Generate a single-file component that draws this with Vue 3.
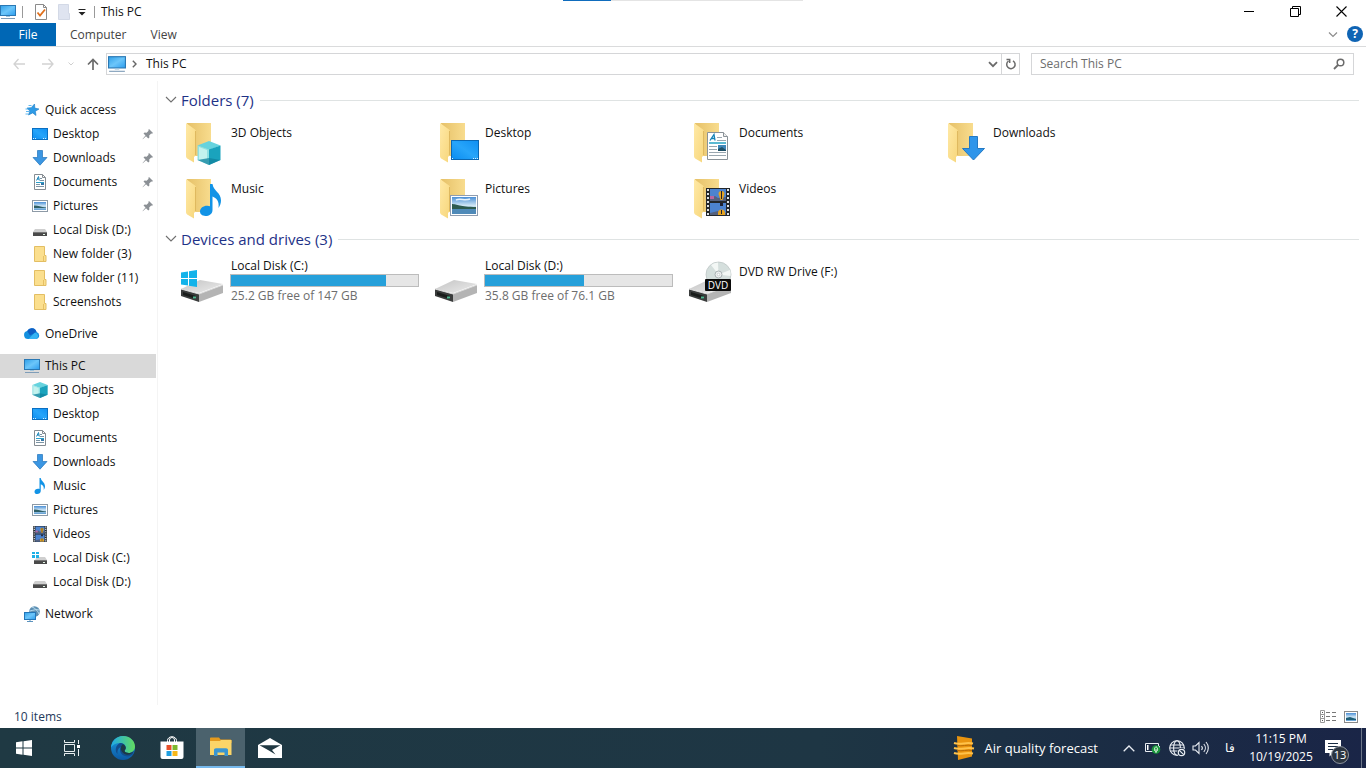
<template>
  <div class="desktop">
    <svg class="sprite" width="0" height="0" aria-hidden="true">
      <defs>
        <linearGradient id="gScreen" x1="0" y1="0" x2="1" y2="1">
          <stop offset="0" stop-color="#2f9fe8" />
          <stop offset="0.5" stop-color="#6cc6fa" />
          <stop offset="1" stop-color="#2b9cee" />
        </linearGradient>
        <linearGradient id="gDesk" x1="0" y1="1" x2="1" y2="0">
          <stop offset="0" stop-color="#0a8cf0" />
          <stop offset="0.5" stop-color="#27a5fa" />
          <stop offset="1" stop-color="#0f8ff2" />
        </linearGradient>
        <linearGradient id="gBack" x1="0" y1="0" x2="1" y2="0">
          <stop offset="0" stop-color="#e6c168" />
          <stop offset="1" stop-color="#f8dc8e" />
        </linearGradient>
        <linearGradient id="gFlap" x1="0" y1="0" x2="1" y2="1">
          <stop offset="0" stop-color="#ffe9a6" />
          <stop offset="1" stop-color="#f7d67b" />
        </linearGradient>
        <linearGradient id="gDriveTop" x1="0" y1="0" x2="1" y2="1">
          <stop offset="0" stop-color="#c4c4c4" />
          <stop offset="1" stop-color="#ececec" />
        </linearGradient>
        <linearGradient id="gSky" x1="0" y1="0" x2="0" y2="1">
          <stop offset="0" stop-color="#4a8fd6" />
          <stop offset="0.5" stop-color="#cfe6f5" />
          <stop offset="1" stop-color="#5c9bd0" />
        </linearGradient>
        <linearGradient id="gEdge" x1="0" y1="0" x2="1" y2="0">
          <stop offset="0" stop-color="#1fa9e8" />
          <stop offset="1" stop-color="#63dc5e" />
        </linearGradient>
        <linearGradient id="gEdgeLow" x1="0" y1="0" x2="0" y2="1">
          <stop offset="0" stop-color="#1a9be0" />
          <stop offset="1" stop-color="#0c59a4" />
        </linearGradient>
      </defs>

      <!-- 16px icons -->
      <symbol id="pc" viewBox="0 0 16 16">
        <rect x="0.5" y="1.5" width="15" height="10" fill="url(#gScreen)" stroke="#2a78b4" />
        <path d="M6 12h4v1h-4z" fill="#9fc4dc" />
        <path d="M1 14.5h14" stroke="#7f9db8" />
      </symbol>
      <symbol id="star" viewBox="0 0 16 16">
        <path d="M10.500 2l.3 4.100 4.200.9-3.600 2.300.6 4.200-3.300-2.600L4.500 13l1.300-4L3 6l4.200-.3z" fill="#2e9be6" stroke="#1c7cc4" stroke-width="0.6" />
        <path d="M4.500 3.500h3M1.500 7h3M2 9.500h3M1.500 12h3" stroke="#4fb0ee" stroke-width="0.9" />
      </symbol>
      <symbol id="desk" viewBox="0 0 16 16">
        <rect x="0.5" y="2.500" width="15" height="11" fill="url(#gDesk)" stroke="#0a6fc2" />
        <path d="M1 12.500h1M3 12.500h1M11 12.500h1M13 12.500h1" stroke="#d7eeff" />
      </symbol>
      <symbol id="down" viewBox="0 0 16 16">
        <path d="M5.500.5h5v7h4.500L8 15.200 1 7.500h4.500z" fill="#3b96e2" stroke="#2374ba" stroke-width="0.7" />
      </symbol>
      <symbol id="doc" viewBox="0 0 16 16">
        <path d="M2.500.5h8l3 3v12h-11z" fill="#fff" stroke="#858c92" />
        <path d="M10.500.5v3h3" fill="none" stroke="#858c92" />
        <path d="M4.500 6.500l2-4 .8 4M5 5h2" fill="none" stroke="#1c86ba" />
        <path d="M4 8.500h8" stroke="#2a9fca" />
        <path d="M4 10.500h4M4 12.500h8M8 6.500h4M8 4.500h2" stroke="#7c94a4" />
        <path d="M9 9h3v2h-3z" fill="#3577a8" />
      </symbol>
      <symbol id="pic" viewBox="0 0 16 16">
        <rect x="0.5" y="2.500" width="15" height="11" fill="#fff" stroke="#8d9aa6" />
        <rect x="2" y="4" width="12" height="8" fill="url(#gSky)" />
        <path d="M2 7.500c3-.5 6 1 12 2V10H2z" fill="#2f5f66" />
      </symbol>
      <symbol id="disk" viewBox="0 0 16 16">
        <path d="M3 7h10l2 3H1z" fill="#cfcfcf" />
        <path d="M1 10h14v4H1z" fill="#4a4a4a" />
        <path d="M1 10h14v1H1z" fill="#777" />
        <path d="M11 12h2v1h-2z" fill="#e3f5e6" />
      </symbol>
      <symbol id="diskc" viewBox="0 0 16 16">
        <path d="M5 7h8l2 3H3z" fill="#cfcfcf" />
        <path d="M2 10h13v4H2z" fill="#4a4a4a" />
        <path d="M2 10h13v1H2z" fill="#777" />
        <path d="M11 12h2v1h-2z" fill="#e3f5e6" />
        <path d="M0 2h3v2H0zM4 2h3v2H4zM0 5h3v3H0zM4 5h3v3H4z" fill="#1fb0e6" />
      </symbol>
      <symbol id="folder" viewBox="0 0 16 16">
        <path d="M2.500.5h10v9h1.500v6H2.500z" fill="#fbdf8e" stroke="#e3be63" />
        <path d="M11.500 10v5" stroke="#e6c064" />
      </symbol>
      <symbol id="cloud" viewBox="0 0 16 16">
        <path d="M4 13a4 4 0 0 1-.8-7.900A5 5 0 0 1 12.500 6 3.600 3.600 0 0 1 12.400 13z" fill="#1490df" />
        <path d="M3.200 5.100A5 5 0 0 1 12.500 6L6 9.500z" fill="#0f5fc4" />
        <path d="M4.500 13L11 6.500a3.600 3.600 0 0 1 1.500 6.500z" fill="#35b4f4" />
      </symbol>
      <symbol id="cube" viewBox="0 0 24 24">
        <path d="M12 0L23.500 4.500 12 9 .5 4.500z" fill="#66d3de" />
        <path d="M.5 4.500L12 8.500V24L.5 19z" fill="#8fe0e2" />
        <path d="M23.500 4.500L12 8.500V24l11.500-5z" fill="#1aa3bd" />
        <path d="M2 6l8 3v9l-8 1z" fill="#c3f2ee" />
        <path d="M12 17L.5 19 12 24l11.500-5z" fill="#0f7f9b" opacity="0.700" />
      </symbol>
      <symbol id="note" viewBox="0 0 22 32">
        <path d="M10 0h2.500c1 7 8.500 8.500 8.500 16.500 0 3-1 5-2.500 7.500 1-7-2-10-6-11.500V26c0 4-3.500 6-7 6S0 30 0 27.300c0-3.300 3.500-5.800 7.500-5.600.9 0 1.800.2 2.500.5z" fill="#1293e6" />
      </symbol>
      <symbol id="film" viewBox="0 0 24 28">
        <path d="M0 0h24v28H0z" fill="#23272b" />
        <path d="M2 1v27M22 1v27" stroke="#dfe3e5" stroke-width="2" stroke-dasharray="2 2" />
        <path d="M4 1h16v12H4zM4 15h16v12H4z" fill="#4c83cf" />
        <path d="M4 10l5-2 3 2 8-1v4H4zM4 25l8-2 8 2v2H4z" fill="#55617d" />
        <path d="M12.500 6a3 3 0 0 1 6 0l-2 6h-2zM12 25a3.500 3.500 0 0 1 7 0v2h-7z" fill="#e6a421" />
        <path d="M15 3h1v8h-1zM14 15h3v3h-3zM15 22h1v4h-1z" fill="#1e2130" />
        <path d="M4 8h4v3H4z" fill="#b865a0" />
      </symbol>
      <symbol id="net" viewBox="0 0 16 16">
        <circle cx="10.500" cy="5.500" r="5.300" fill="#5c8fb3" />
        <path d="M8 1c3 1 6 4 7 7M6 5c4-1 7-2 9-1" stroke="#b9dcef" fill="none" />
        <rect x="0.5" y="6.500" width="11" height="7" fill="url(#gScreen)" stroke="#2376b8" />
        <path d="M3 15.500h6M6 14v1" stroke="#5b92bd" />
      </symbol>
      <symbol id="pin" viewBox="0 0 12 12">
        <path d="M7 1l4 4-1 .7-.8-.2-2 2 .2 2L6.300 10.500 4 8.200.8 11.200.6 11l2.900-3.400L1.500 5.500 2.600 4.500l2 .2 2-2L6.300 2z" fill="#8b9095" />
      </symbol>

      <!-- 48px icons -->
      <symbol id="base" viewBox="0 0 48 48">
        <path d="M8 4h24v33H12z" fill="url(#gBack)" />
        <path d="M7 4l9 6.500c.7.500 1 1.200 1 2V36l-2 2v5.500L9 40c-1.300-.8-2-1.500-2-3z" fill="url(#gFlap)" />
        <path d="M16.500 12v24" stroke="#dfb95f" />
      </symbol>
      <symbol id="drive" viewBox="0 0 48 48">
        <path d="M2 31l19-9 23 4-24 9z" fill="url(#gDriveTop)" />
        <path d="M2 31l18 5v8L2 38z" fill="#3a3c3c" />
        <path d="M20 36l24-9v8l-24 9z" fill="#b4b4b4" />
        <path d="M2 31l18 5 24-9" fill="none" stroke="#dadada" />
        <path d="M4 34l13 4v3L4 37z" fill="#191c1b" />
        <path d="M14 38.500h3v2h-3z" fill="#4fb58f" />
      </symbol>
      <symbol id="big-cube" viewBox="0 0 48 48">
        <use href="#base" width="48" height="48" />
        <use href="#cube" x="18" y="22" width="24" height="24" />
      </symbol>
      <symbol id="big-desk" viewBox="0 0 48 48">
        <use href="#base" width="48" height="48" />
        <rect x="18.500" y="21.500" width="27" height="19" fill="url(#gDesk)" stroke="#0a67b4" />
        <path d="M19 39.500h1M40 39.500h1M42 39.500h1M44 39.500h1" stroke="#d7eeff" />
      </symbol>
      <symbol id="big-doc" viewBox="0 0 48 48">
        <use href="#base" width="48" height="48" />
        <path d="M20.500 13.500h16l4 4v23h-20z" fill="#fff" stroke="#8a9298" />
        <path d="M36.500 13.500v4h4" fill="#eee" stroke="#8a9298" />
        <path d="M23 21.500l4-6 1 6M24 19.500h4" fill="none" stroke="#1482b6" stroke-width="1.300" />
        <path d="M22 24h17" stroke="#25a3c4" stroke-width="1.500" />
        <path d="M30 18.500h5M30 21.500h9M22 27.500h8M22 30.500h8M22 33.500h17M22 36.500h17" stroke="#9aa7b0" />
        <path d="M31 26h8v6h-8z" fill="#3f86b8" />
        <path d="M31 30l4-2 4 3v1h-8z" fill="#1e4f66" />
      </symbol>
      <symbol id="big-down" viewBox="0 0 48 48">
        <use href="#base" width="48" height="48" />
        <path d="M28.500 17.500h8v12h7L32.500 41 21.500 29.500h7z" fill="#2f95ea" stroke="#2379c4" />
      </symbol>
      <symbol id="big-note" viewBox="0 0 48 48">
        <use href="#base" width="48" height="48" />
        <use href="#note" x="21" y="9" width="22" height="32" />
      </symbol>
      <symbol id="big-pic" viewBox="0 0 48 48">
        <use href="#base" width="48" height="48" />
        <rect x="17.500" y="20.500" width="27" height="20" fill="#fff" stroke="#8f9db0" />
        <rect x="19" y="22" width="24" height="17" fill="url(#gSky)" />
        <path d="M19 29c5 0 8 3 24 3v2H19z" fill="#2d5b4f" />
        <path d="M19 34h24v5H19z" fill="#4f8ab8" />
        <path d="M23 25c4-2 9 1 14-1" fill="none" stroke="#e8f3fb" stroke-width="1.500" />
      </symbol>
      <symbol id="big-film" viewBox="0 0 48 48">
        <use href="#base" width="48" height="48" />
        <use href="#film" x="19" y="13" width="24" height="28" />
      </symbol>
      <symbol id="big-drivec" viewBox="0 0 48 48">
        <use href="#drive" width="48" height="48" />
        <path d="M2 14.500l7-1V20H2zM10 13.300l8-1.300v8h-8zM2 21h7v6.500l-7-1zM10 21h8v8l-8-1.300z" fill="#12b3ea" />
      </symbol>
      <symbol id="big-dvd" viewBox="0 0 48 48">
        <use href="#drive" width="48" height="48" />
        <circle cx="31.500" cy="16.500" r="12.500" fill="#d5dfdd" stroke="#b9c2c2" stroke-width="0.700" />
        <path d="M31.500 16.500L24 7a12 12 0 0 1 7-2.500zM31.500 16.500L43 12a12 12 0 0 1 .5 6z" fill="#f3f7f5" />
        <circle cx="31.500" cy="16.500" r="3.500" fill="#eef1f1" stroke="#a9b1b3" />
        <circle cx="31.500" cy="16.500" r="1.300" fill="#fff" stroke="#a9b1b3" stroke-width="0.500" />
        <rect x="18" y="21" width="26" height="12" rx="1" fill="#0b0b0b" />
      </symbol>
    </svg>

    <main class="window">
      <header class="titlebar">
        <svg class="i16"><use href="#pc" /></svg>
        <span class="bar"></span>
        <button class="quick" aria-label="Properties">
          <svg width="14" height="16" viewBox="0 0 14 16">
            <path d="M1.500.5h8l3 3v12h-11z" fill="#fff" stroke="#8b8b8b" />
            <path d="M9.500.5v3h3" fill="none" stroke="#8b8b8b" />
            <path d="M3.500 8.500l2.500 3 5-6" fill="none" stroke="#e0701c" stroke-width="1.800" />
          </svg>
        </button>
        <button class="quick" aria-label="New folder">
          <svg width="14" height="16" viewBox="0 0 14 16">
            <path d="M1.500.5h10v9h1v6h-11z" fill="#dfe4f0" stroke="#d3d9e6" />
          </svg>
        </button>
        <button class="more" aria-label="Customize Quick Access Toolbar">
          <svg width="8" height="8" viewBox="0 0 8 8"><path d="M.5 1h7v1h-7zM.5 4h7L4 7.500z" fill="#222" /></svg>
        </button>
        <span class="bar"></span>
        <h1>This PC</h1>
        <div class="progress-strip"></div>
        <div class="win-buttons">
          <button aria-label="Minimize"><svg width="11" height="11" viewBox="0 0 11 11"><path d="M0 5.500h10" stroke="#000" /></svg></button>
          <button aria-label="Restore"><svg width="11" height="11" viewBox="0 0 11 11"><path d="M.5 2.500h8v8h-8zM2.500 2V.5h8v8H9" fill="none" stroke="#000" /></svg></button>
          <button aria-label="Close"><svg width="11" height="11" viewBox="0 0 11 11"><path d="M.5.5l10 10M10.500.5l-10 10" stroke="#000" stroke-width="1.100" /></svg></button>
        </div>
      </header>

      <nav class="ribbon">
        <button class="file">File</button>
        <button>Computer</button>
        <button>View</button>
        <span class="spacer"></span>
        <button class="expand" aria-label="Expand the Ribbon">
          <svg width="10" height="6" viewBox="0 0 10 6"><path d="M1 .5l4 4 4-4" fill="none" stroke="#8c8c8c" stroke-width="1.200" /></svg>
        </button>
        <button class="help" aria-label="Help">?</button>
      </nav>

      <div class="address-row">
        <button class="nav-btn" aria-label="Back"><svg width="12" height="12" viewBox="0 0 12 12"><path d="M12 6H1M5.500 1L1 6l4.500 5" fill="none" stroke="#d2d2d2" stroke-width="1.300" /></svg></button>
        <button class="nav-btn" aria-label="Forward"><svg width="12" height="12" viewBox="0 0 12 12"><path d="M0 6h11M6.500 1L11 6l-4.500 5" fill="none" stroke="#d2d2d2" stroke-width="1.300" /></svg></button>
        <button class="nav-btn recent" aria-label="Recent locations"><svg width="6" height="4" viewBox="0 0 6 4"><path d="M.5.5L3 3 5.500.5" fill="none" stroke="#cfcfcf" /></svg></button>
        <button class="nav-btn up" aria-label="Up"><svg width="12" height="12" viewBox="0 0 12 12"><path d="M6 12V1.500M1 6.500l5-5 5 5" fill="none" stroke="#6b6b6b" stroke-width="1.700" /></svg></button>
        <div class="address">
          <svg class="i18"><use href="#pc" /></svg>
          <svg class="crumb-arrow" width="5" height="8" viewBox="0 0 5 8"><path d="M.8.8L4 4 .8 7.200" fill="none" stroke="#666" stroke-width="1.400" /></svg>
          <button class="crumb">This PC</button>
          <span class="spacer"></span>
          <button class="drop" aria-label="Previous locations"><svg width="10" height="7" viewBox="0 0 10 7"><path d="M1 1.200l4 4 4-4" fill="none" stroke="#6b6b6b" stroke-width="1.800" /></svg></button>
          <button class="refresh" aria-label="Refresh">
            <svg width="12" height="12" viewBox="0 0 12 12"><path d="M8 2.800A4.200 4.200 0 1 1 3.500 3M1.500 1.500h3.200v3.500" fill="none" stroke="#6b6b6b" stroke-width="1.500" /></svg>
          </button>
        </div>
        <div class="search">
          <input type="text" v-model="query" placeholder="Search This PC" aria-label="Search This PC" />
          <svg width="12" height="12" viewBox="0 0 12 12"><circle cx="7.500" cy="4.500" r="3.300" fill="none" stroke="#6b6b6b" stroke-width="1.500" /><path d="M5 7L1 11" stroke="#6b6b6b" stroke-width="1.800" /></svg>
        </div>
      </div>

      <div class="body">
        <nav class="tree">
          <ul v-for="group in tree" :key="group.name">
            <li v-for="item in [group, ...group.children]" :key="item.name">
              <a href="#" :class="{ root: item.children, active: item === selected }" @click.prevent="selected = item">
                <svg class="i16"><use :href="'#' + item.icon" /></svg>
                <span>{{ item.name }}</span>
                <svg v-if="item.pinned" class="pin"><use href="#pin" /></svg>
              </a>
            </li>
          </ul>
        </nav>

        <section class="content">
          <h2>
            <svg width="12" height="8" viewBox="0 0 12 8"><path d="M1 1l5 5 5-5" fill="none" stroke="#6f6f6f" stroke-width="1.100" /></svg>
            Folders ({{ folders.length }})
          </h2>
          <div class="grid">
            <button v-for="f in folders" :key="f.name" class="tile">
              <svg class="i48"><use :href="'#' + f.icon" /></svg>
              <span class="name">{{ f.name }}</span>
            </button>
          </div>

          <h2>
            <svg width="12" height="8" viewBox="0 0 12 8"><path d="M1 1l5 5 5-5" fill="none" stroke="#6f6f6f" stroke-width="1.100" /></svg>
            Devices and drives ({{ drives.length }})
          </h2>
          <div class="grid">
            <button v-for="d in drives" :key="d.name" class="tile">
              <svg class="i48" viewBox="0 0 48 48">
                <use :href="'#' + d.icon" width="48" height="48" />
                <text v-if="d.disc" class="disc-label" x="31" y="31" text-anchor="middle">{{ d.disc }}</text>
              </svg>
              <span v-if="d.disc" class="name">{{ d.name }}</span>
              <span v-else class="info">
                <span>{{ d.name }}</span>
                <span class="usage"><span class="used" :style="{ width: d.used + '%' }"></span></span>
                <span class="free">{{ d.free }} free of {{ d.total }}</span>
              </span>
            </button>
          </div>
        </section>
      </div>

      <footer class="status">
        <span>{{ folders.length + drives.length }} items</span>
        <button aria-label="Details view">
          <svg width="16" height="13" viewBox="0 0 16 13">
            <path d="M.5.5h4v12h-4zM.5 4.500h4M.5 8.500h4" fill="none" stroke="#9a9a9a" />
            <path d="M2 2.500h1M2 6.500h1M2 10.500h1" stroke="#555" />
            <path d="M6 2.500h4M12 2.500h4M6 6.500h4M12 6.500h4M6 10.500h4M12 10.500h4" stroke="#777" />
          </svg>
        </button>
        <button aria-label="Large thumbnails">
          <svg width="14" height="12" viewBox="0 0 14 12">
            <rect x="0.5" y="0.5" width="13" height="11" fill="#fff" stroke="#8a8a8a" />
            <rect x="2" y="2" width="10" height="8" fill="url(#gSky)" />
            <path d="M2 7l4-1 6 2v1H2z" fill="#1f5f78" />
          </svg>
        </button>
      </footer>
    </main>

    <footer class="taskbar">
      <button class="start" aria-label="Start">
        <svg width="16" height="16" viewBox="0 0 16 16"><path d="M0 2.200L6.500 1.300v6.200H0zM7.500 1.200L16 0v7.500H7.500zM0 8.500h6.500v6.200L0 13.800zM7.500 8.500H16V16l-8.500-1.200z" fill="#fff" /></svg>
      </button>
      <button class="task-view" aria-label="Task View">
        <svg width="16" height="16" viewBox="0 0 16 16">
          <path d="M.5 0v2.500h10V0M.5 16v-2.500h10V16M.5 4.500h10v7H.5z" fill="none" stroke="#e8eef0" />
          <path d="M14.500 0v4M14.500 9v7" stroke="#e8eef0" />
          <path d="M13 5h3v3h-3z" fill="#fff" />
        </svg>
      </button>
      <button aria-label="Microsoft Edge">
        <svg width="24" height="24" viewBox="0 0 24 24">
          <circle cx="12" cy="12" r="12" fill="url(#gEdgeLow)" />
          <path d="M0 11.500C.5 5 5.500 0 12 0c7 0 12 5 12 10.500 0 4-3 6.500-6.500 6.500-2.500 0-4-1-4-2 0-.8 1.200-1.200 1.200-3.200C14.700 9 12 7 9 7c-4 0-7.500 2-9 4.500z" fill="url(#gEdge)" />
          <path d="M9 7c3 0 5.700 2 5.700 4.800 0 2-1.200 2.400-1.200 3.200 0 1 1.500 2 4 2 2 0 4-.8 5.300-2.300l-.8 3.300C20 20 17 21 14 20c-4-1-6-5-4.500-9C7 12.500 6 15 6.500 18c-3-3-2-9 2.500-11z" fill="#124c8c" />
          <path d="M13.500 15c-.2-.9 1.200-1.200 1.200-3.200 0-1.500-1.200-3-3-3.500C8.500 11 9.500 17 15 18.500c3 .8 6-.5 7.500-3-3.500 2.500-8.500 1.500-9-.5z" fill="#1d3943" />
        </svg>
      </button>
      <button aria-label="Microsoft Store">
        <svg width="24" height="24" viewBox="0 0 24 24">
          <path d="M7.500 6V4.500a4.500 3.800 0 0 1 9 0V6M9.500 6V4a2.500 2.500 0 0 1 5 0v2" fill="none" stroke="#fff" />
          <path d="M.5 5.500h23V21a2 2 0 0 1-2 2h-19a2 2 0 0 1-2-2z" fill="#fff" />
          <path d="M6.500 9h5v5h-5z" fill="#e8502a" />
          <path d="M12.500 9h5v5h-5z" fill="#7cb82f" />
          <path d="M6.500 15h5v5h-5z" fill="#1f9fe0" />
          <path d="M12.500 15h5v5h-5z" fill="#f7b718" />
        </svg>
      </button>
      <button class="running" aria-label="File Explorer">
        <svg width="22" height="20" viewBox="0 0 22 20">
          <path d="M0 1.500C0 .7.500.5 1 .5h8l1.500 2H20c1 0 1.500.5 1.500 1.500V6H0z" fill="#e59a1d" />
          <path d="M0 4h10l1-1h10.500v15H0z" fill="#fbd568" />
          <path d="M4 19v-6c0-1 .8-1.800 2-1.800h10c1.200 0 2 .8 2 1.800v6h-3.500v-3.500h-7V19z" fill="#3a96d2" />
        </svg>
      </button>
      <button aria-label="Mail">
        <svg width="24" height="20" viewBox="0 0 24 20">
          <path d="M0 7L12 0l12 7v13H0z" fill="#fff" />
          <path d="M1.500 7.300h21L14 12l3.500 4.500L10 12z" fill="#203842" />
        </svg>
      </button>
      <span class="spacer"></span>
      <button class="weather">
        <svg width="22" height="24" viewBox="0 0 22 24">
          <path d="M4 0l15 2.500v18L5 24z" fill="#e9940f" />
          <path d="M1 7c6 2 12-1 19 .5M1 12c6 2 13-1 20 .5M1 17c6 2 12-1 19 .5" fill="none" stroke="#ffc24a" stroke-width="2" />
          <path d="M4 9.500c5 1 10-1 15 0M4 14.500c5 1 10-1 15 0" fill="none" stroke="#b86b06" />
        </svg>
        <span>Air quality forecast</span>
      </button>
      <button class="tray" aria-label="Show hidden icons"><svg width="12" height="7" viewBox="0 0 12 7"><path d="M.7 6.300L6 1l5.300 5.300" fill="none" stroke="#e9edf3" stroke-width="1.300" /></svg></button>
      <button class="tray" aria-label="Battery">
        <svg width="16" height="12" viewBox="0 0 16 12">
          <path d="M.5 1.500h13v8H.5zM14.500 4v3" fill="none" stroke="#e9edf3" />
          <path d="M2 3h1.500v5H2z" fill="#fff" />
          <circle cx="11" cy="7.500" r="4.300" fill="#17963a" />
          <path d="M9.500 8.500c-.5-2 .8-3.300 1.500-4 .8.700 2 2 1.500 4-.8 1-2.200 1-3 0zM11 7v4" fill="none" stroke="#e6f6e8" stroke-width="0.900" />
        </svg>
      </button>
      <button class="tray" aria-label="Network">
        <svg width="17" height="17" viewBox="0 0 17 17">
          <g fill="none" stroke="#e9edf3" stroke-width="1.100">
            <circle cx="8" cy="8" r="7.300" />
            <ellipse cx="8" cy="8" rx="3.400" ry="7.300" />
            <path d="M1.500 5h13M1.500 11h8M.7 8h14.600" />
          </g>
          <circle cx="12.500" cy="12.500" r="4.500" fill="#1b2d44" />
          <circle cx="12.500" cy="12.500" r="3.200" fill="none" stroke="#e9edf3" stroke-width="1.200" />
          <path d="M10.300 10.300l4.400 4.400" stroke="#e9edf3" stroke-width="1.200" />
        </svg>
      </button>
      <button class="tray" aria-label="Volume">
        <svg width="18" height="14" viewBox="0 0 18 14">
          <g fill="none" stroke="#e9edf3" stroke-width="1.100">
            <path d="M1 5h2.500L7 1.500v11L3.500 9H1z" />
            <path d="M9.500 5a3 3 0 0 1 0 4M11.800 3a6 6 0 0 1 0 8M14 1a9 9 0 0 1 0 12" />
          </g>
        </svg>
      </button>
      <button class="lang">فا</button>
      <button class="clock"><span>11:15 PM</span><span>10/19/2025</span></button>
      <button class="notify" aria-label="13 notifications">
        <svg width="16" height="17" viewBox="0 0 16 17"><path d="M0 0h16v13H8l-3.500 3.500V13H0z" fill="#fff" /><path d="M3 3.500h10M3 6.500h10M3 9.500h7" stroke="#1b2d44" /></svg>
        <span class="badge">13</span>
      </button>
      <button class="peek" aria-label="Show desktop"></button>
    </footer>
  </div>
</template>

<script setup>
import { ref, shallowRef } from 'vue';

const tree = [
  {
    name: 'Quick access',
    icon: 'star',
    children: [
      { name: 'Desktop', icon: 'desk', pinned: true },
      { name: 'Downloads', icon: 'down', pinned: true },
      { name: 'Documents', icon: 'doc', pinned: true },
      { name: 'Pictures', icon: 'pic', pinned: true },
      { name: 'Local Disk (D:)', icon: 'disk' },
      { name: 'New folder (3)', icon: 'folder' },
      { name: 'New folder (11)', icon: 'folder' },
      { name: 'Screenshots', icon: 'folder' }
    ]
  },
  { name: 'OneDrive', icon: 'cloud', children: [] },
  {
    name: 'This PC',
    icon: 'pc',
    children: [
      { name: '3D Objects', icon: 'cube' },
      { name: 'Desktop', icon: 'desk' },
      { name: 'Documents', icon: 'doc' },
      { name: 'Downloads', icon: 'down' },
      { name: 'Music', icon: 'note' },
      { name: 'Pictures', icon: 'pic' },
      { name: 'Videos', icon: 'film' },
      { name: 'Local Disk (C:)', icon: 'diskc' },
      { name: 'Local Disk (D:)', icon: 'disk' }
    ]
  },
  { name: 'Network', icon: 'net', children: [] }
];

const folders = [
  { name: '3D Objects', icon: 'big-cube' },
  { name: 'Desktop', icon: 'big-desk' },
  { name: 'Documents', icon: 'big-doc' },
  { name: 'Downloads', icon: 'big-down' },
  { name: 'Music', icon: 'big-note' },
  { name: 'Pictures', icon: 'big-pic' },
  { name: 'Videos', icon: 'big-film' }
];

const drives = [
  { name: 'Local Disk (C:)', icon: 'big-drivec', free: '25.2 GB', total: '147 GB', used: 83 },
  { name: 'Local Disk (D:)', icon: 'drive', free: '35.8 GB', total: '76.1 GB', used: 53 },
  { name: 'DVD RW Drive (F:)', icon: 'big-dvd', disc: 'DVD' }
];

// shallow, so the selected item can be compared by identity
const selected = shallowRef(tree[2]);
const query = ref('');
</script>

<style>
body {
  margin: 0;
  background: #fff;
}
</style>

<style scoped>
* {
  box-sizing: border-box;
}

.desktop {
  display: flex;
  flex-direction: column;
  min-height: 100vh;
  font-family: 'Segoe UI', 'Open Sans', 'Noto Sans', sans-serif;
  font-size: 12px;
  line-height: 16px;
  color: #111;
}

.sprite {
  position: absolute;
}

button {
  display: flex;
  align-items: center;
  justify-content: center;
  margin: 0;
  padding: 0;
  border: none;
  background: none;
  color: inherit;
  font: inherit;
  cursor: default;
}

svg {
  display: block;
  flex: none;
}

.i16 {
  width: 16px;
  height: 16px;
}

.i18 {
  width: 18px;
  height: 18px;
}

.i48 {
  width: 48px;
  height: 48px;
}

.spacer {
  flex: 1;
}

.window {
  flex: 1;
  display: flex;
  flex-direction: column;
}

/* Title bar */
.titlebar {
  position: relative;
  display: flex;
  align-items: center;
  height: 23px;
  padding-right: 2px;
}

.bar {
  width: 1px;
  height: 12px;
  margin: 0 6px;
  background: #999;
}

.quick {
  width: 23px;
  height: 22px;
}

.more {
  width: 13px;
  height: 22px;
}

h1 {
  flex: 1;
  margin: 0;
  font-size: 12px;
  font-weight: normal;
}

.progress-strip {
  position: absolute;
  top: 0;
  left: 50%;
  width: 240px;
  height: 1px;
  margin-left: -120px;
  background: linear-gradient(to right, #0f6cbd 20%, #e4e4e4 20%);
}

.win-buttons {
  display: flex;
}

.win-buttons button {
  width: 46px;
  height: 22px;
}

/* Ribbon tabs */
.ribbon {
  display: flex;
  height: 24px;
  padding-right: 3px;
  border-bottom: 1px solid #dadbdc;
  color: #444;
}

.ribbon button {
  padding: 0 10px 0 14px;
}

.ribbon .file {
  width: 56px;
  padding: 0;
  background: #0067b5;
  color: #fff;
}

.ribbon .expand {
  padding: 0 9px;
}

.ribbon .help {
  width: 16px;
  height: 16px;
  margin: 3px 0;
  padding: 0;
  border-radius: 50%;
  background: #0f64b4;
  color: #fff;
  font-weight: bold;
}

/* Address row */
.address-row {
  display: flex;
  align-items: center;
  height: 34px;
  padding: 0 12px 0 4px;
}

.nav-btn {
  width: 29px;
  height: 22px;
}

.recent {
  width: 18px;
}

.up {
  width: 26px;
}

.address,
.search {
  display: flex;
  align-items: center;
  height: 22px;
  border: 1px solid #d5d6d8;
}

.address {
  flex: 3;
  padding-left: 1px;
}

.crumb-arrow {
  margin: 0 9px 0 6px;
}

.drop {
  width: 16px;
  height: 20px;
}

.refresh {
  width: 18px;
  height: 20px;
  border-left: 1px solid #d5d6d8;
}

.search {
  width: 323px;
  margin-left: 11px;
  padding: 0 8px;
}

.search input {
  flex: 1;
  min-width: 0;
  padding: 0;
  border: none;
  outline: none;
  background: none;
  color: #111;
  font: inherit;
}

.search input::placeholder {
  color: #6d6d6d;
  opacity: 1;
}

/* Navigation tree */
.body {
  flex: 1;
  display: flex;
}

.tree {
  width: 158px;
  padding-top: 17px;
  border-right: 1px solid #f4f4f4;
}

.tree ul {
  margin: 0 1px 8px 0;
  padding: 0;
  list-style: none;
}

.tree a {
  display: flex;
  align-items: center;
  gap: 5px;
  height: 24px;
  padding: 0 2px 0 32px;
  color: inherit;
  text-decoration: none;
}

.tree a.root {
  padding-left: 24px;
}

.tree a.active {
  background: #d9d9d9;
}

.pin {
  width: 12px;
  height: 12px;
  margin-left: auto;
}

/* Content */
.content {
  flex: 1;
  padding: 8px 7px 0 7px;
}

h2 {
  display: flex;
  align-items: center;
  height: 22px;
  margin: 0 0 4px;
  color: #1e3287;
  font-size: 15px;
  font-weight: normal;
}

h2 svg {
  margin-right: 4px;
}

h2::after {
  content: '';
  flex: 1;
  height: 1px;
  margin-left: 6px;
  background: #dfe3e3;
}

.grid {
  display: grid;
  grid-template-columns: repeat(auto-fill, 254px);
  margin-bottom: 1px;
  padding-left: 14px;
}

.tile {
  align-items: flex-start;
  justify-content: flex-start;
  gap: 4px;
  height: 56px;
  padding-top: 4px;
  text-align: left;
}

.tile .name {
  margin-top: 6px;
}

.info {
  display: flex;
  flex-direction: column;
  width: 188px;
}

.usage {
  height: 13px;
  margin: 0 0 1px -1px;
  border: 1px solid #bcbcbc;
  background: #e6e6e6;
}

.used {
  display: block;
  height: 100%;
  background: #26a0da;
}

.free {
  color: #6d6d6d;
}

.disc-label {
  font-size: 10px;
  fill: #fff;
}

/* Status bar */
.status {
  display: flex;
  align-items: center;
  height: 23px;
  padding: 0 8px 0 14px;
  gap: 8px;
  color: #1e395b;
}

.status span {
  flex: 1;
}

/* Taskbar */
.taskbar {
  display: flex;
  align-items: center;
  height: 40px;
  background: linear-gradient(to right, #1f3943, #1e3644 60%, #1b2d44 80%, #1a2547);
  color: #fff;
}

.taskbar > button {
  width: 49px;
  height: 40px;
}

.taskbar .start {
  width: 48px;
}

.taskbar .task-view {
  width: 48px;
  margin-right: 2px;
}

.taskbar .running {
  border-bottom: 2px solid #76b9ed;
  background: #4b626d;
}

.taskbar .weather {
  width: auto;
  gap: 9px;
  margin-right: 19px;
  font-size: 13px;
}

.taskbar .tray {
  width: 24px;
}

.taskbar .lang {
  width: 34px;
}

.taskbar .clock {
  flex-direction: column;
  width: 68px;
  line-height: 18px;
}

.taskbar .notify {
  position: relative;
  justify-content: flex-start;
  width: 46px;
  padding-left: 10px;
}

.badge {
  position: absolute;
  right: 12px;
  bottom: 4px;
  width: 18px;
  height: 18px;
  border: 1px solid #8b929c;
  border-radius: 50%;
  background: #2b3440;
  font-size: 11px;
  text-align: center;
}

.taskbar .peek {
  width: 5px;
  border-left: 1px solid #6c7688;
}
</style>
